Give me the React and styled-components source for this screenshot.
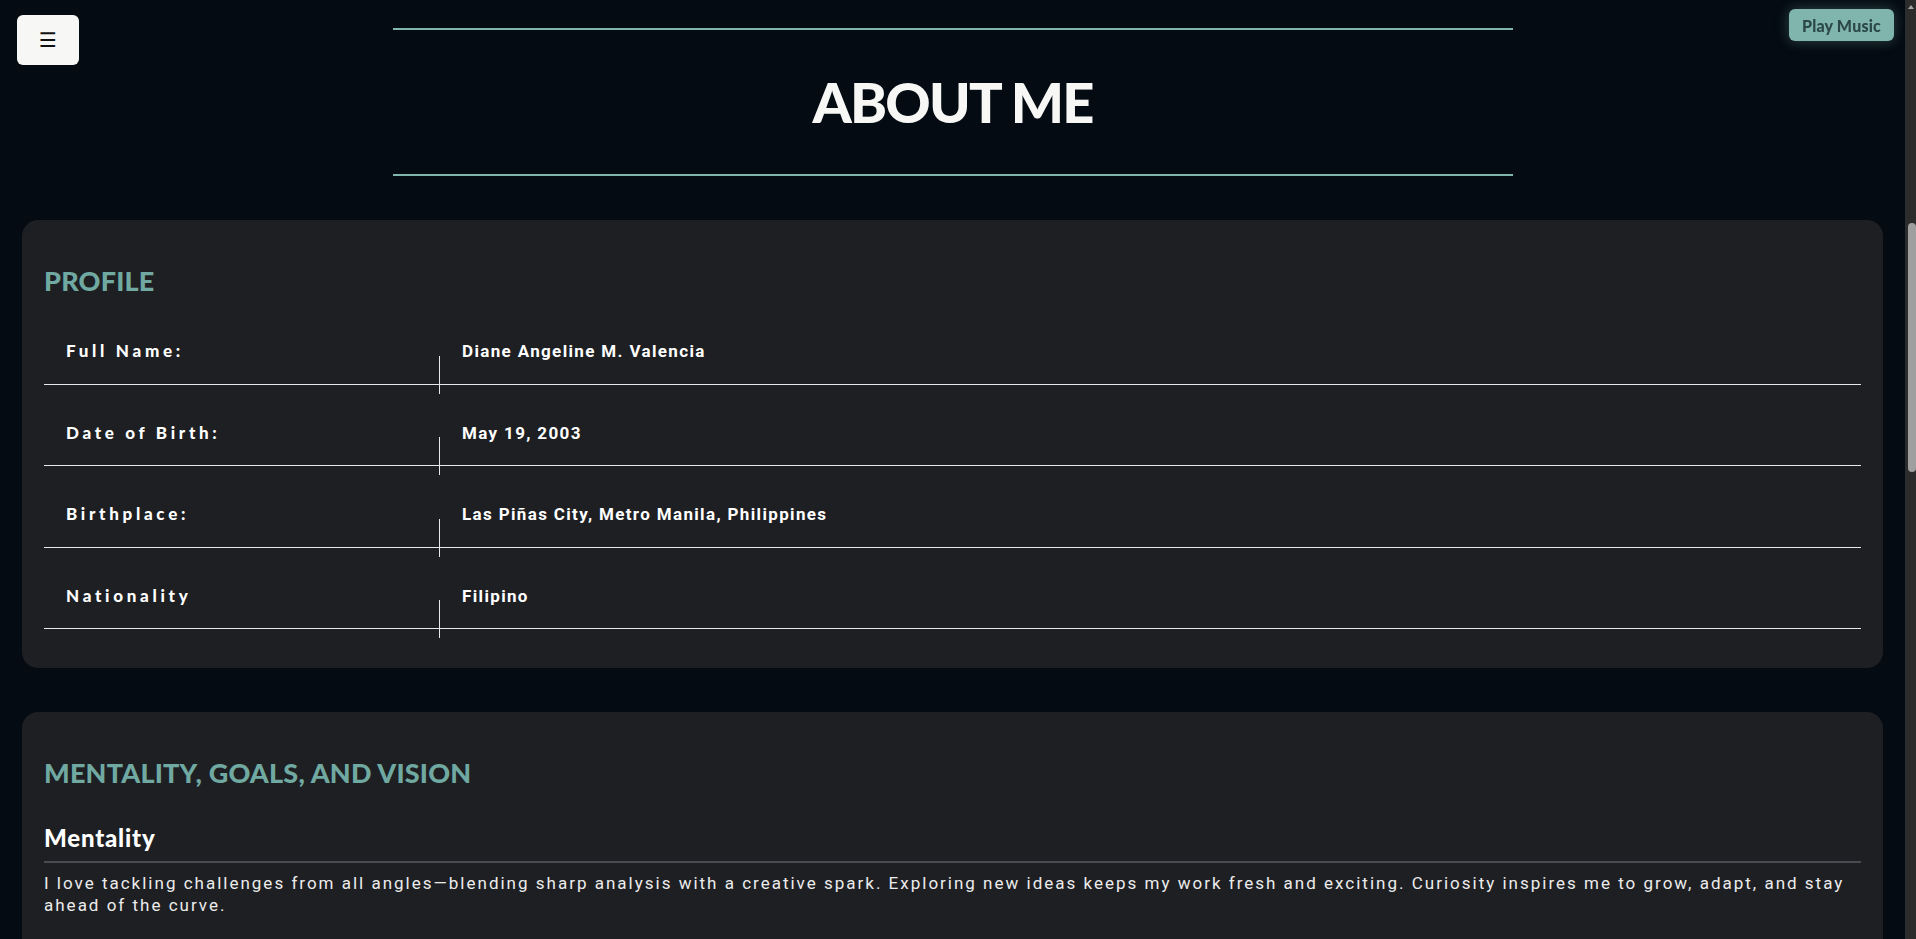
import React from "react";
import styled, { createGlobalStyle } from "styled-components";

const GlobalStyle = createGlobalStyle`
  html, body {
    margin: 0;
    padding: 0;
    background: #040b12;
  }
  body {
    font-family: "Roboto", "Liberation Sans", sans-serif;
    color: #f4f4f2;
  }
  * { box-sizing: border-box; }
`;

const Page = styled.div`
  background: #040b12;
  padding: 0 11px 60px 0;
`;

const ScrollRail = styled.div`
  position: fixed;
  top: 0;
  right: 0;
  width: 11px;
  height: 100vh;
  background: #2c2c2c;
  display: flex;
  flex-direction: column;
  align-items: center;
  z-index: 20;
`;

const RailArrow = styled.span`
  margin-top: 5px;
  width: 0;
  height: 0;
  border-left: 3.5px solid transparent;
  border-right: 3.5px solid transparent;
  border-bottom: 4px solid #a3a3a3;
`;

const RailThumb = styled.span`
  margin-top: 214px;
  width: 8px;
  height: 249px;
  border-radius: 4px;
  background: #9f9f9f;
  align-self: flex-end;
`;

const MenuButton = styled.button`
  position: fixed;
  top: 15px;
  left: 17px;
  width: 62px;
  height: 50px;
  border: none;
  border-radius: 6px;
  background: #f7f7f5;
  color: #111;
  font-family: "DejaVu Sans", sans-serif;
  font-size: 20px;
  line-height: 1;
  display: flex;
  align-items: center;
  justify-content: center;
  cursor: pointer;
  z-index: 10;
`;

const MusicButton = styled.button`
  position: fixed;
  top: 9px;
  right: 22px;
  height: 32px;
  padding: 0 13px;
  border: none;
  border-radius: 6px;
  background: #7fb5ad;
  color: #2c4747;
  font-family: "Lato", sans-serif;
  font-weight: 900;
  font-size: 16px;
  letter-spacing: 0.2px;
  box-shadow: 0 0 14px rgba(127, 181, 173, 0.35);
  cursor: pointer;
  z-index: 10;
`;

const Header = styled.header`
  width: 1120px;
  margin: 28px auto 0;
  border-top: 2px solid #7fb5ad;
  border-bottom: 2px solid #7fb5ad;
  padding: 38px 0 38px;
  text-align: center;
`;

const Title = styled.h1`
  margin: 0;
  font-family: "Lato", sans-serif;
  font-weight: 900;
  font-size: 56px;
  line-height: 68px;
  color: #f7f7f5;
  letter-spacing: -1.8px;
`;

const Main = styled.main`
  padding: 0 22px;
  display: flex;
  flex-direction: column;
  gap: 44px;
  margin-top: 44px;
`;

const Card = styled.section`
  background: #1e1f23;
  border-radius: 16px;
  padding: 45px 22px 39px;
`;

const CardTitle = styled.h2`
  margin: 0;
  font-family: "Lato", sans-serif;
  font-weight: 900;
  font-size: 27px;
  line-height: 31px;
  letter-spacing: 0.2px;
  color: #70a9a1;
`;

const InfoList = styled.div`
  margin-top: 7px;
`;

const InfoRow = styled.div`
  display: grid;
  grid-template-columns: 395px 1fr;
  border-bottom: 1px solid #e8e8e8;
`;

const Label = styled.div`
  padding: 38px 22px 22.5px;
  font-family: "Lato", sans-serif;
  font-weight: 900;
  font-size: 17px;
  line-height: 20px;
  letter-spacing: 3.7px;
  color: #ffffff;
`;

const Value = styled.div`
  position: relative;
  padding: 38px 23px 22.5px;
  font-family: "Roboto", sans-serif;
  font-weight: 700;
  font-size: 17px;
  line-height: 20px;
  letter-spacing: 1.35px;
  color: #ffffff;

  &::before {
    content: "";
    position: absolute;
    left: 0;
    bottom: -10px;
    width: 1px;
    height: 38px;
    background: #e8e8e8;
  }
`;

const SubTitle = styled.h3`
  margin: 36px 0 0;
  padding-bottom: 10px;
  border-bottom: 2px solid #4a4b50;
  font-family: "Lato", sans-serif;
  font-weight: 900;
  font-size: 24px;
  line-height: 27px;
  letter-spacing: 0.8px;
  color: #ffffff;
`;

const Paragraph = styled.p`
  margin: 9px 0 0;
  font-family: "Roboto", sans-serif;
  font-size: 17px;
  line-height: 22px;
  letter-spacing: 2px;
  color: #ececec;
`;

const profile = [
  ["Full Name:", "Diane Angeline M. Valencia"],
  ["Date of Birth:", "May 19, 2003"],
  ["Birthplace:", "Las Piñas City, Metro Manila, Philippines"],
  ["Nationality", "Filipino"],
];

export default function App() {
  return (
    <Page>
      <GlobalStyle />
      <ScrollRail aria-hidden="true">
        <RailArrow />
        <RailThumb />
      </ScrollRail>
      <MenuButton aria-label="Menu">☰</MenuButton>
      <MusicButton>Play Music</MusicButton>
      <Header>
        <Title>ABOUT ME</Title>
      </Header>
      <Main>
        <Card>
          <CardTitle>PROFILE</CardTitle>
          <InfoList>
            {profile.map(([k, v]) => (
              <InfoRow key={k}>
                <Label>{k}</Label>
                <Value>{v}</Value>
              </InfoRow>
            ))}
          </InfoList>
        </Card>
        <Card>
          <CardTitle>MENTALITY, GOALS, AND VISION</CardTitle>
          <SubTitle>Mentality</SubTitle>
          <Paragraph>
            I love tackling challenges from all angles—blending sharp analysis with a creative spark. Exploring new ideas keeps my work fresh and exciting. Curiosity inspires me to grow, adapt, and stay ahead of the curve.
          </Paragraph>
        </Card>
      </Main>
    </Page>
  );
}
